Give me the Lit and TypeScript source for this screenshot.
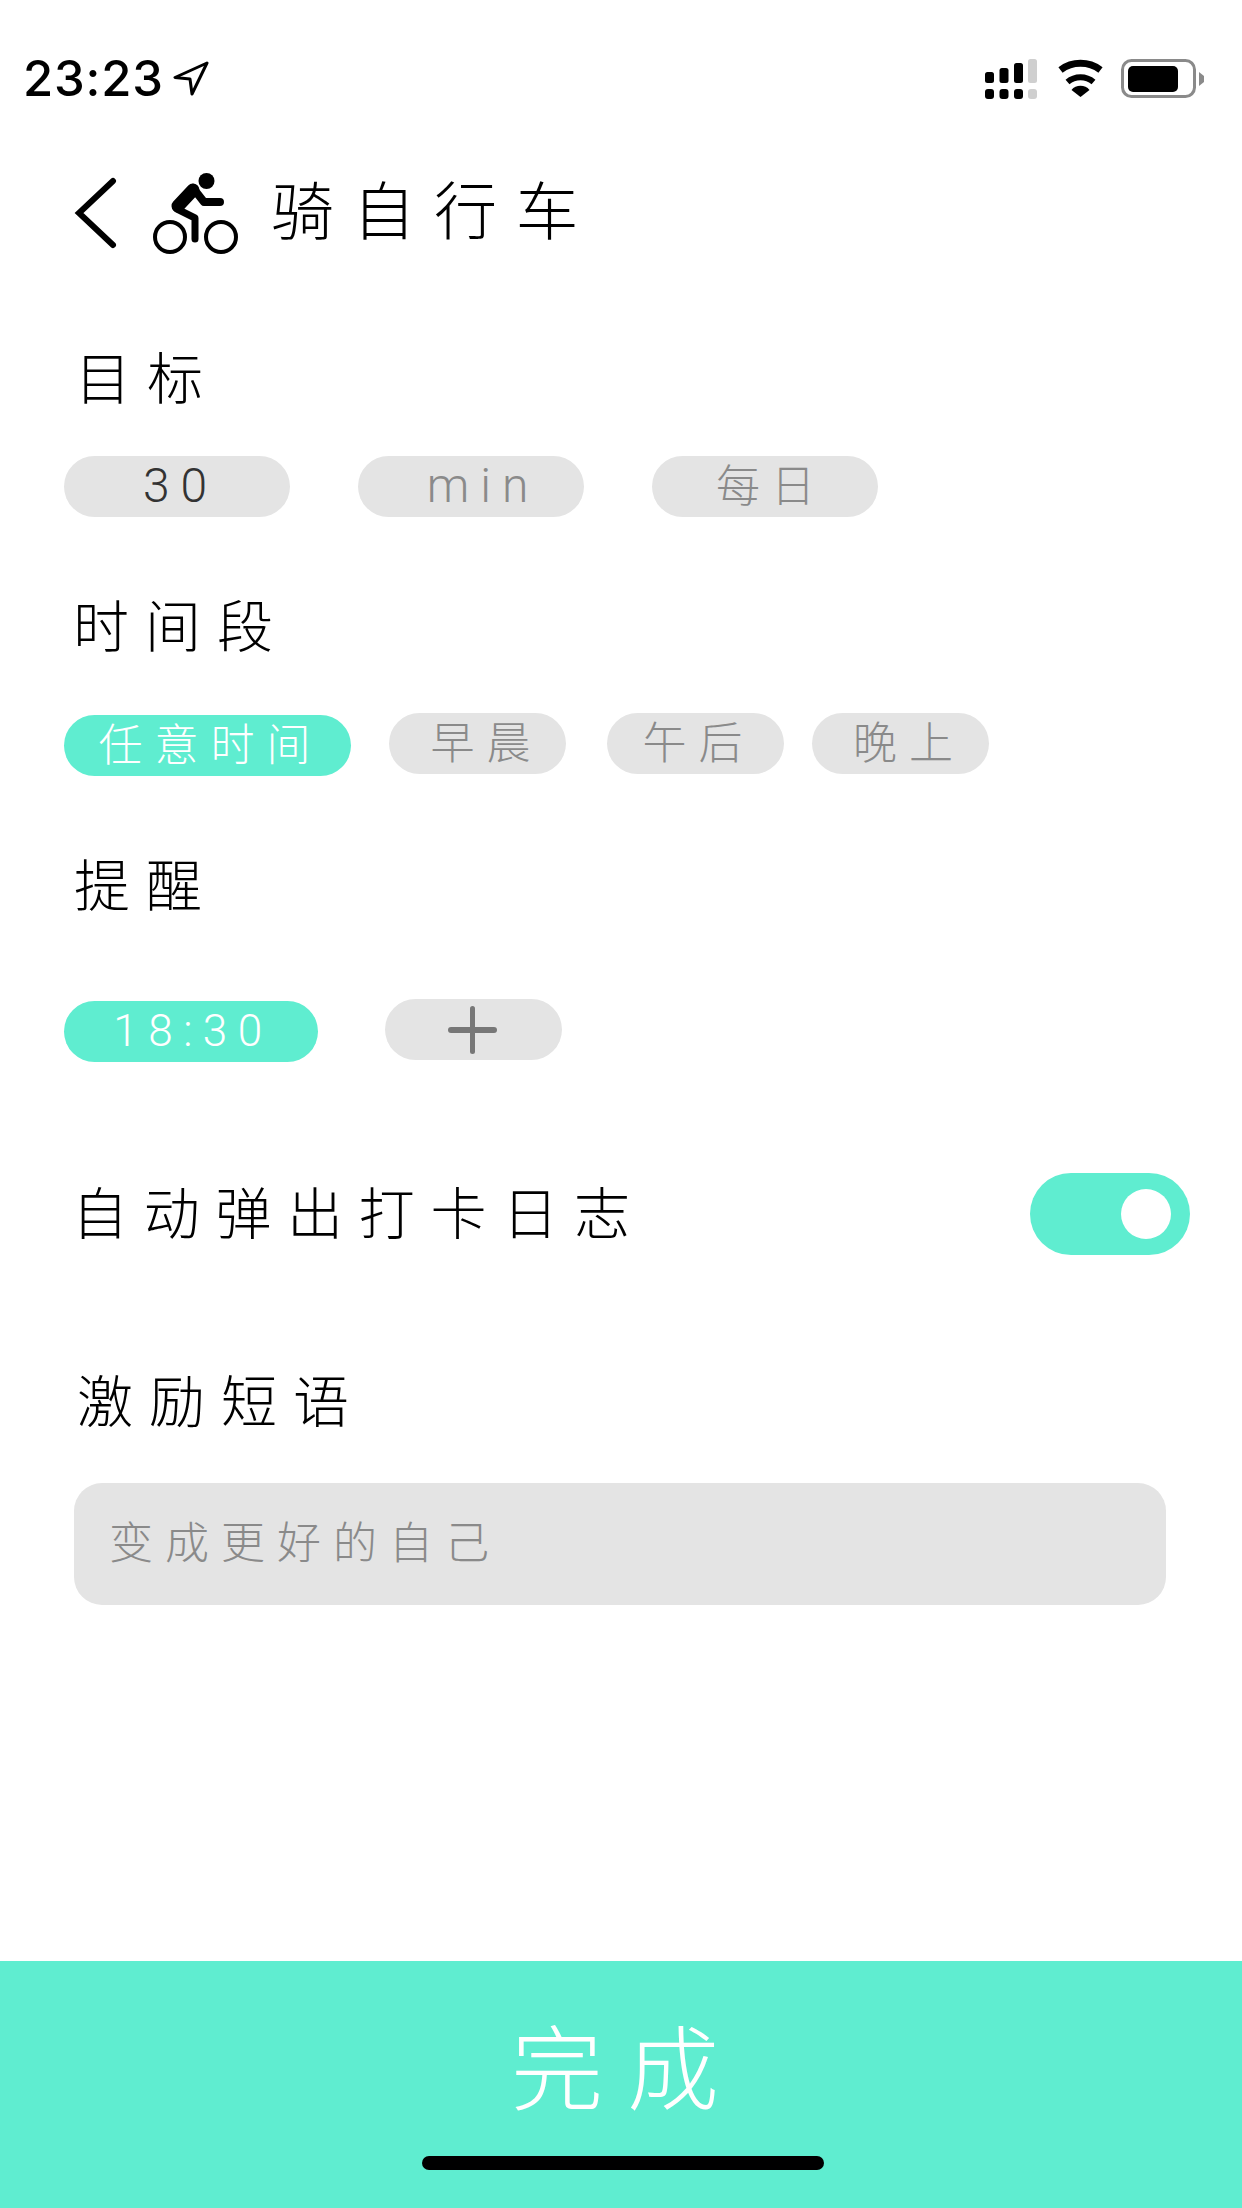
import { html, svg, css, LitElement } from "lit";
import { customElement } from "lit/decorators.js";

/* Habit settings screen: status bar, goal, time of day, reminders, motto, done button */

const periods = [
  { label: "早晨", cls: "morning" },
  { label: "午后", cls: "afternoon" },
  { label: "晚上", cls: "evening" },
];

@customElement("app-root")
export class AppRoot extends LitElement {
  static styles = css`
    :host {
      display: block;
      width: 1242px;
      height: 2208px;
      background: #fff;
      color: #000;
      font-family: "Noto Sans CJK SC", "Noto Sans", sans-serif;
      font-weight: 300;
    }
    .Page {
      display: flex;
      flex-direction: column;
      height: 100%;
    }
    .Status {
      display: flex;
      align-items: flex-start;
      justify-content: space-between;
      height: 120px;
      padding: 59px 37px 0 23px;
      box-sizing: border-box;
    }
    .Status-left {
      display: flex;
      align-items: flex-start;
      gap: 9px;
    }
    .Time {
      font-family: Inter, "Liberation Sans", sans-serif;
      font-size: 49px;
      font-weight: 500;
      line-height: 39px;
      letter-spacing: 0.8px;
    }
    .Arrow {
      margin-top: 2px;
    }
    .Status-right {
      display: flex;
      align-items: flex-start;
      gap: 19px;
    }
    .Wifi {
      margin-right: -3px;
    }
    .Nav {
      display: flex;
      align-items: center;
      height: 186px;
      padding-left: 73px;
    }
    .Bike {
      margin-left: 36px;
    }
    .Title {
      margin-left: 33px;
      padding-bottom: 12px;
      font-size: 63px;
      letter-spacing: 18.5px;
      line-height: 70px;
    }
    .Heading {
      height: 60px;
      padding-left: 73px;
      font-size: 56px;
      line-height: 54px;
      letter-spacing: 16px;
    }
    .Heading-goal {
      margin-top: 42px;
      padding-left: 75px;
    }
    .Heading-period {
      margin-top: 79px;
    }
    .Heading-remind {
      margin-top: 79px;
      padding-left: 74px;
    }
    .Heading-motto {
      margin-top: 116px;
      padding-left: 77px;
    }
    .Pills {
      display: flex;
      align-items: flex-start;
      padding-left: 64px;
    }
    .Pills-goal {
      margin-top: 48px;
      gap: 68px;
    }
    .Pills-period {
      margin-top: 57px;
    }
    .Pills-remind {
      margin-top: 84px;
    }
    .Pill {
      display: flex;
      align-items: center;
      justify-content: center;
      height: 61px;
      padding-bottom: 6px;
      box-sizing: border-box;
      border-radius: 31px;
      background: #e4e4e4;
      color: #8a8a8a;
      font-size: 44px;
      line-height: 55px;
      letter-spacing: 12px;
    }
    .Pill-on {
      background: #5fedd0;
      color: #fff;
      margin-top: 2px;
    }
    .Digits {
      padding-bottom: 2px;
      font-family: Roboto, "Noto Sans", sans-serif;
      font-weight: 300;
      font-size: 48px;
      letter-spacing: 10px;
    }
    .Dark {
      color: #333;
      padding-left: 7px;
      letter-spacing: 11px;
    }
    .Wide {
      width: 226px;
    }
    .Min {
      padding-left: 24px;
      letter-spacing: 11px;
    }
    .Daily {
      padding-left: 12px;
      letter-spacing: 11px;
    }
    .Any {
      width: 287px;
      padding-left: 6px;
    }
    .Slot {
      width: 177px;
    }
    .morning {
      margin-left: 38px;
      padding-left: 18px;
    }
    .afternoon {
      margin-left: 41px;
      padding-left: 6px;
    }
    .evening {
      margin-left: 28px;
      padding-left: 17px;
    }
    .Alarm {
      width: 254px;
      padding-bottom: 0;
      padding-left: 4px;
      font-size: 44px;
      letter-spacing: 10.5px;
    }
    .Add {
      margin-left: 67px;
      padding: 0 2px 0 0;
    }
    .Auto {
      display: flex;
      align-items: center;
      justify-content: space-between;
      height: 82px;
      margin-top: 111px;
      padding: 0 52px 0 72px;
    }
    .Auto-label {
      padding-bottom: 10px;
      font-size: 56px;
      letter-spacing: 15.7px;
    }
    .Toggle {
      display: flex;
      align-items: center;
      justify-content: flex-end;
      width: 160px;
      height: 82px;
      padding-right: 19px;
      box-sizing: border-box;
      border-radius: 41px;
      background: #5fedd0;
    }
    .Knob {
      width: 50px;
      height: 50px;
      border-radius: 50%;
      background: #fff;
    }
    .Motto {
      display: flex;
      align-items: center;
      width: 1092px;
      height: 122px;
      margin: 52px 0 0 74px;
      padding: 0 0 8px 35px;
      box-sizing: border-box;
      border-radius: 28px;
      background: #e4e4e4;
      color: #8a8a8a;
      font-size: 44px;
      letter-spacing: 12px;
    }
    .Footer {
      display: flex;
      flex-direction: column;
      align-items: center;
      height: 247px;
      margin-top: auto;
      background: #5fedd0;
      color: #fff;
    }
    .Done {
      margin-top: 47px;
      padding-left: 12px;
      font-size: 92px;
      line-height: 110px;
      letter-spacing: 24px;
    }
    .Home {
      width: 402px;
      height: 14px;
      margin: 38px 0 0 4px;
      border-radius: 7px;
      background: #000;
    }
  `;

  private signal() {
    const bars = [
      [0, 13, 11],
      [14.5, 9, 15],
      [29, 4, 20],
    ];
    return html`<svg width="52" height="40" viewBox="0 0 52 40">
      ${bars.map(
        ([x, y, h]) => svg`<rect x=${x} y=${y} width="9" height=${h} rx="2.5" />
          <rect x=${x} y="30" width="9" height="10" rx="3" />`
      )}
      <rect x="43" y="0" width="9" height="24" rx="2.5" fill="#cfcfcf" />
      <rect x="43" y="30" width="9" height="10" rx="3" fill="#cfcfcf" />
    </svg>`;
  }

  private wifi() {
    return html`<svg class="Wifi" width="49" height="38" viewBox="0 0 48 38" fill="none">
      <path d="M4 11A33.5 33.5 0 0 1 44 11" stroke="#000" stroke-width="7" />
      <path d="M11 23A20 20 0 0 1 37 23" stroke="#000" stroke-width="6" />
      <path d="M24 38L15 31A11.5 11.5 0 0 1 33 31Z" fill="#000" />
    </svg>`;
  }

  private battery() {
    return html`<svg width="84" height="40" viewBox="0 0 84 40">
      <rect x="1.5" y="1.5" width="72" height="36" rx="9" fill="none" stroke="#8a8a8a" stroke-width="3" />
      <rect x="7" y="7" width="50" height="26" rx="5" />
      <path d="M78 13L83 17V23L78 27Z" fill="#8a8a8a" />
    </svg>`;
  }

  private bike() {
    return html`<svg class="Bike" width="85" height="81" viewBox="0 0 85 81" fill="none">
      <circle cx="53.5" cy="8" r="8" fill="#000" />
      <circle cx="17" cy="64" r="15" stroke="#000" stroke-width="4" />
      <circle cx="68" cy="64" r="15" stroke="#000" stroke-width="4" />
      <path d="M40 17L25 33" stroke="#000" stroke-width="13" stroke-linecap="round" />
      <path d="M40 15L51 29H67" stroke="#000" stroke-width="8" stroke-linecap="round" stroke-linejoin="round" />
      <path d="M24 36L42 45V66" stroke="#000" stroke-width="7" stroke-linecap="round" stroke-linejoin="round" />
    </svg>`;
  }

  render() {
    return html`<div class="Page">
      <div class="Status">
        <div class="Status-left">
          <span class="Time">23:23</span>
          <svg class="Arrow" width="36" height="35" viewBox="0 0 36 35" fill="none">
            <path d="M34 2L2 16.5L17 18L19 33Z" stroke="#000" stroke-width="3" stroke-linejoin="round" />
          </svg>
        </div>
        <div class="Status-right">${this.signal()}${this.wifi()}${this.battery()}</div>
      </div>

      <div class="Nav">
        <svg width="44" height="72" viewBox="0 0 44 72" fill="none">
          <path d="M40 4L6 36L40 68" stroke="#000" stroke-width="6" stroke-linecap="round" stroke-linejoin="miter" />
        </svg>
        ${this.bike()}
        <span class="Title">骑自行车</span>
      </div>

      <div class="Heading Heading-goal">目标</div>
      <div class="Pills Pills-goal">
        <div class="Pill Wide Digits Dark">30</div>
        <div class="Pill Wide Digits Min">min</div>
        <div class="Pill Wide Daily">每日</div>
      </div>

      <div class="Heading Heading-period">时间段</div>
      <div class="Pills Pills-period">
        <div class="Pill Pill-on Any">任意时间</div>
        ${periods.map((p) => html`<div class="Pill Slot ${p.cls}">${p.label}</div>`)}
      </div>

      <div class="Heading Heading-remind">提醒</div>
      <div class="Pills Pills-remind">
        <div class="Pill Pill-on Digits Alarm">18:30</div>
        <div class="Pill Slot Add">
          <svg width="49" height="48" viewBox="0 0 49 48">
            <rect x="0" y="21" width="49" height="6" rx="3" fill="#777" />
            <rect x="22" y="0" width="5" height="48" rx="2.5" fill="#777" />
          </svg>
        </div>
      </div>

      <div class="Auto">
        <span class="Auto-label">自动弹出打卡日志</span>
        <div class="Toggle"><div class="Knob"></div></div>
      </div>

      <div class="Heading Heading-motto">激励短语</div>
      <div class="Motto">变成更好的自己</div>

      <div class="Footer">
        <div class="Done">完成</div>
        <div class="Home"></div>
      </div>
    </div>`;
  }
}

declare global {
  interface HTMLElementTagNameMap {
    "app-root": AppRoot;
  }
}
